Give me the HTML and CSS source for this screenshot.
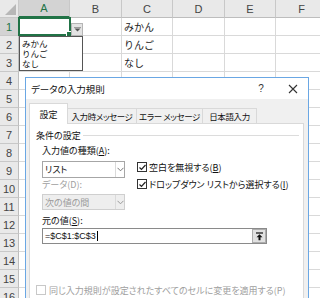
FILE: index.html
```html
<!doctype html>
<html>
<head>
  <title>データの入力規則</title>
  <link rel="stylesheet" href="styles.css">
</head>
<body>
  <div class="sheet">
    <div class="grid">
      <div class="corner"><div class="tri"></div></div><div class="ch on">A</div><div class="ch">B</div><div class="ch">C</div><div class="ch">D</div><div class="ch">E</div><div class="ch">F</div>
      <div class="rh on">1</div><div class="cell sel"><div class="handle"></div></div><div class="cell"></div><div class="cell jp">みかん</div><div class="cell"></div><div class="cell"></div><div class="cell"></div>
      <div class="rh">2</div><div class="cell"></div><div class="cell"></div><div class="cell jp">りんご</div><div class="cell"></div><div class="cell"></div><div class="cell"></div>
      <div class="rh">3</div><div class="cell"></div><div class="cell"></div><div class="cell jp">なし</div><div class="cell"></div><div class="cell"></div><div class="cell"></div>
      <div class="rh">4</div><div class="cell"></div><div class="cell"></div><div class="cell"></div><div class="cell"></div><div class="cell"></div><div class="cell"></div>
      <div class="rh">5</div><div class="cell"></div><div class="cell"></div><div class="cell"></div><div class="cell"></div><div class="cell"></div><div class="cell"></div>
      <div class="rh">6</div><div class="cell"></div><div class="cell"></div><div class="cell"></div><div class="cell"></div><div class="cell"></div><div class="cell"></div>
      <div class="rh">7</div><div class="cell"></div><div class="cell"></div><div class="cell"></div><div class="cell"></div><div class="cell"></div><div class="cell"></div>
      <div class="rh">8</div><div class="cell"></div><div class="cell"></div><div class="cell"></div><div class="cell"></div><div class="cell"></div><div class="cell"></div>
      <div class="rh">9</div><div class="cell"></div><div class="cell"></div><div class="cell"></div><div class="cell"></div><div class="cell"></div><div class="cell"></div>
      <div class="rh">10</div><div class="cell"></div><div class="cell"></div><div class="cell"></div><div class="cell"></div><div class="cell"></div><div class="cell"></div>
      <div class="rh">11</div><div class="cell"></div><div class="cell"></div><div class="cell"></div><div class="cell"></div><div class="cell"></div><div class="cell"></div>
      <div class="rh">12</div><div class="cell"></div><div class="cell"></div><div class="cell"></div><div class="cell"></div><div class="cell"></div><div class="cell"></div>
      <div class="rh">13</div><div class="cell"></div><div class="cell"></div><div class="cell"></div><div class="cell"></div><div class="cell"></div><div class="cell"></div>
      <div class="rh">14</div><div class="cell"></div><div class="cell"></div><div class="cell"></div><div class="cell"></div><div class="cell"></div><div class="cell"></div>
      <div class="rh">15</div><div class="cell"></div><div class="cell"></div><div class="cell"></div><div class="cell"></div><div class="cell"></div><div class="cell"></div>
      <div class="rh">16</div><div class="cell"></div><div class="cell"></div><div class="cell"></div><div class="cell"></div><div class="cell"></div><div class="cell"></div>
    </div>

    <!-- in-cell dropdown button and its open list -->
    <div class="ddbtn">
      <svg width="7" height="5" viewBox="0 0 7 5"><path d="M0 0h7" stroke="#555" stroke-width="1"/><path d="M0.5 1.5h6l-3 3z" fill="#555"/></svg>
    </div>
    <div class="ddlist">
      <div>みかん</div>
      <div>りんご</div>
      <div>なし</div>
    </div>

    <!-- validation dialog -->
    <div class="dialog">
      <div class="titlebar">
        <span class="title">データの入力規則</span>
        <span class="tbtn help">?</span>
        <span class="tbtn close">
          <svg width="10" height="10" viewBox="0 0 10 10"><path d="M1 1l8 8M9 1l-8 8" stroke="#333" stroke-width="1.1"/></svg>
        </span>
      </div>
      <div class="dbody">
        <div class="tabs">
          <div class="tab active">設定</div>
          <div class="tab w1">入力時メッセージ</div>
          <div class="tab w2">エラー メッセージ</div>
          <div class="tab w3">日本語入力</div>
        </div>
        <div class="panel">
          <div class="group"><span>条件の設定</span><div class="rule"></div></div>
          <div class="cond">
            <div class="left">
              <div class="lbl">入力値の種類(<u>A</u>):</div>
              <div class="select">
                <span class="val">リスト</span>
                <span class="arr"><svg width="7" height="5" viewBox="0 0 7 5"><path d="M0.5 0.8l3 3 3-3" fill="none" stroke="#777" stroke-width="1"/></svg></span>
              </div>
              <div class="lbl dim">データ(D):</div>
              <div class="select off">
                <span class="val">次の値の間</span>
                <span class="arr"><svg width="7" height="5" viewBox="0 0 7 5"><path d="M0.5 0.8l3 3 3-3" fill="none" stroke="#999" stroke-width="1"/></svg></span>
              </div>
            </div>
            <div class="right">
              <div class="chk">
                <span class="box"><svg width="9" height="9" viewBox="0 0 9 9"><path d="M1.5 4.5l2 2 4-4.5" fill="none" stroke="#222" stroke-width="1.2"/></svg></span>
                <span>空白を無視する(<u>B</u>)</span>
              </div>
              <div class="chk">
                <span class="box"><svg width="9" height="9" viewBox="0 0 9 9"><path d="M1.5 4.5l2 2 4-4.5" fill="none" stroke="#222" stroke-width="1.2"/></svg></span>
                <span>ドロップダウン リストから選択する(<u>I</u>)</span>
              </div>
            </div>
          </div>
          <div class="lbl src">元の値(<u>S</u>):</div>
          <div class="input">
            <span class="txt">=$C$1:$C$3<span class="caret"></span></span>
            <span class="pick"><svg width="9" height="9" viewBox="0 0 9 9"><path d="M1 1h7" stroke="#111" stroke-width="1.2"/><path d="M4.5 2.2l3 3h-2v3h-2v-3h-2z" fill="#111"/></svg></span>
          </div>
          <div class="chk all">
            <span class="box off"></span>
            <span>同じ入力規則が設定されたすべてのセルに変更を適用する(P)</span>
          </div>
        </div>
      </div>
    </div>
  </div>
</body>
</html>
```

FILE: styles.css
```css
body {
  margin: 0;
  overflow: hidden;
  background: #fff;
}

.sheet {
  position: relative;
  width: 320px;
  height: 298px;
  overflow: hidden;
}

/* spreadsheet grid */
.grid {
  display: grid;
  grid-template-columns: 19px 51px 52px 51px 52px 51px 52px;
  grid-auto-rows: 18px;
  font-family: "Liberation Sans", Arial, sans-serif;
}
.corner, .ch, .rh, .cell {
  box-sizing: border-box;
  border-right: 1px solid #d9d9d9;
  border-bottom: 1px solid #d9d9d9;
}
.corner {
  background: #e9e9e9;
  border-color: #c8c8c8;
  display: flex;
  align-items: flex-end;
  justify-content: flex-end;
  padding: 0 2px 2px 0;
}
.tri {
  width: 0;
  height: 0;
  border-left: 11px solid transparent;
  border-bottom: 11px solid #b7b7b7;
}
.ch {
  background: #e9e9e9;
  border-right-color: #c8c8c8;
  border-bottom-color: #bdbdbd;
  color: #444;
  font-size: 11px;
  display: flex;
  align-items: center;
  justify-content: center;
}
.ch.on {
  background: #d3d3d3;
  color: #217346;
  border-bottom: 2px solid #217346;
}
.rh {
  background: #e9e9e9;
  border-right-color: #bdbdbd;
  border-bottom-color: #c8c8c8;
  color: #444;
  font-size: 11px;
  display: flex;
  align-items: center;
  justify-content: center;
}
.rh.on {
  background: #d3d3d3;
  color: #217346;
}
.cell.jp {
  font-family: "Noto Sans CJK JP", sans-serif;
  font-size: 10px;
  color: #222;
  padding-left: 2px;
  display: flex;
  align-items: center;
}
.cell.sel {
  position: relative;
  border: 2px solid #217346;
  margin: -1px 0 0 -1px;
  width: 53px;
  height: 19px;
}
.handle {
  position: absolute;
  right: -4px;
  bottom: -4px;
  width: 5px;
  height: 5px;
  background: #217346;
  border: 1px solid #fff;
}

/* dropdown on cell A1 */
.ddbtn {
  position: absolute;
  left: 71px;
  top: 23px;
  width: 12px;
  height: 13px;
  box-sizing: border-box;
  background: #e3e3e3;
  border: 1px solid #b5b5b5;
  display: flex;
  align-items: center;
  justify-content: center;
}
.ddlist {
  position: absolute;
  left: 19px;
  top: 36px;
  width: 64px;
  height: 35px;
  box-sizing: border-box;
  background: #fff;
  border: 1px solid #555;
  padding: 1px 0 0 2px;
  font-family: "Noto Sans CJK JP", sans-serif;
  font-size: 8.5px;
  line-height: 10px;
  color: #111;
}
.ddlist div {
  height: 10px;
}

/* dialog */
.dialog {
  position: absolute;
  left: 25px;
  top: 77px;
  width: 284px;
  height: 240px;
  box-sizing: border-box;
  border: 1px solid #6aa7e4;
  background: #f0f0f0;
  font-family: "Noto Sans CJK JP", sans-serif;
  font-size: 9px;
  font-feature-settings: "palt";
  color: #111;
  display: flex;
  flex-direction: column;
}
.titlebar {
  height: 21px;
  background: #fff;
  display: flex;
  align-items: center;
  padding-left: 5px;
}
.title {
  flex: 1;
  font-size: 9.5px;
}
.tbtn {
  width: 30px;
  height: 21px;
  display: flex;
  align-items: center;
  justify-content: center;
}
.help {
  margin-right: 2px;
  font-family: "Liberation Sans", sans-serif;
  font-size: 10px;
  color: #333;
}
.dbody {
  flex: 1;
  display: flex;
  flex-direction: column;
  padding: 4px 4px 0 3px;
}
.tabs {
  display: flex;
  align-items: flex-end;
  height: 20px;
}
.tab {
  box-sizing: border-box;
  height: 15px;
  border: 1px solid #d9d9d9;
  border-bottom: none;
  border-left: none;
  display: flex;
  align-items: center;
  justify-content: center;
  background: #f0f0f0;
  white-space: nowrap;
  font-size: 8.5px;
  letter-spacing: -0.4px;
  overflow: hidden;
}
.tab.active {
  height: 21px;
  width: 39px;
  border-left: 1px solid #d9d9d9;
  background: #fff;
  margin-bottom: -1px;
  position: relative;
  z-index: 1;
  padding-top: 1px;
  font-size: 9px;
  letter-spacing: 0;
}
.tab.w1 { width: 69px; }
.tab.w2 { width: 66px; }
.tab.w3 { width: 54px; }

.panel {
  flex: 1;
  background: #fff;
  border: 1px solid #d9d9d9;
  padding: 5px 4px 0 6px;
}
.group {
  display: flex;
  align-items: center;
  height: 12px;
}
.rule {
  flex: 1;
  height: 1px;
  background: #dcdcdc;
  margin-left: 2px;
}
.cond {
  display: flex;
  padding-left: 6px;
  margin-top: 4px;
}
.left {
  width: 83px;
}
.lbl {
  height: 12px;
  line-height: 12px;
  white-space: nowrap;
}
.lbl.dim {
  color: #a0a0a0;
  margin-top: 1px;
}
.select {
  box-sizing: border-box;
  height: 17px;
  margin-top: 4px;
  border: 1px solid #a6a6a6;
  display: flex;
  align-items: center;
}
.select .val {
  flex: 1;
  padding-left: 2px;
}
.select .arr {
  width: 8px;
  height: 100%;
  border-left: 1px solid #dadada;
  display: flex;
  align-items: center;
  justify-content: center;
}
.select.off {
  height: 16px;
  margin-top: 3px;
  background: #eeeeee;
  border-color: #cfcfcf;
  color: #9a9a9a;
}
.right {
  margin-left: 12px;
  padding-top: 16px;
}
.chk {
  display: flex;
  align-items: center;
  height: 12px;
  margin-bottom: 5px;
  white-space: nowrap;
}
.box {
  box-sizing: border-box;
  width: 10px;
  height: 10px;
  border: 1px solid #333;
  margin-right: 2px;
  background: #fff;
  display: flex;
  align-items: center;
  justify-content: center;
}
.box svg {
  flex: none;
}
.lbl.src {
  margin: 5px 0 0 6px;
}
.input {
  box-sizing: border-box;
  width: 225px;
  height: 16px;
  margin: 1px 0 0 6px;
  border: 1px solid #8a8a8a;
  display: flex;
  align-items: center;
  font-family: "Liberation Sans", sans-serif;
  font-size: 9px;
}
.txt {
  flex: 1;
  padding-left: 2px;
  display: flex;
  align-items: center;
}
.caret {
  width: 1px;
  height: 10px;
  background: #000;
  margin-left: 1px;
}
.pick {
  box-sizing: border-box;
  width: 14px;
  height: 14px;
  background: #e1e1e1;
  border: 1px solid #adadad;
  display: flex;
  align-items: center;
  justify-content: center;
}
.chk.all {
  margin-top: 40px;
  color: #a0a0a0;
}
.box.off {
  border-color: #c8c8c8;
  margin-right: 3px;
}
```
